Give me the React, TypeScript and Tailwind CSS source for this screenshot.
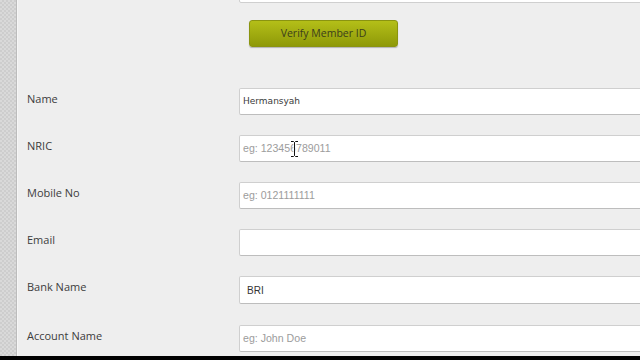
import React from 'react'

const rows = [
  { label: 'Name', value: 'Hermansyah', placeholder: '' },
  { label: 'NRIC', value: '', placeholder: 'eg: 123456789011' },
  { label: 'Mobile No', value: '', placeholder: 'eg: 0121111111' },
  { label: 'Email', value: '', placeholder: '' },
  { label: 'Bank Name', value: 'BRI', placeholder: '' },
  { label: 'Account Name', value: '', placeholder: 'eg: John Doe' }
]

function Field({ label, value, placeholder, idx }: { label: string; value: string; placeholder: string; idx: number }) {
  const bank = label === 'Bank Name'
  return (
    <div className={`flex items-center ${idx === 5 ? 'mt-[21px]' : 'mt-[20px]'} first:mt-0`}>
      <label className="w-[221px] shrink-0 pl-[9px] -mt-[5px] text-[11px] text-[#3c3c3c] font-['Open_Sans',sans-serif]">{label}</label>
      <div className={`relative flex-1 ${bank ? 'h-[28px]' : 'h-[27px]'} bg-white border border-[#cfcfcf] border-b-[#bdbdbd] rounded-l-[2px] -mr-[4px] flex items-center`}>
        {value ? (
          <span className={`${bank ? "pl-[7px] font-['Liberation_Sans',Arial,sans-serif] text-[10px] text-[#333]" : "pl-[3px] font-['DejaVu_Sans',Verdana,sans-serif] text-[9px] text-[#3a3a3a]"}`}>{value}</span>
        ) : (
          <span className="pl-[3px] font-['Liberation_Sans',Arial,sans-serif] text-[10.6px] text-[#9c9c9c]">{placeholder}</span>
        )}
        {label === 'NRIC' && (
          <svg className="absolute left-[50px] top-[4px]" width="9" height="18" viewBox="0 0 9 18">
            <path d="M1 1.5h2.5l1 1 1-1H8M4.5 2.5v13M1 16.5h2.5l1-1 1 1H8" fill="none" stroke="#fff" strokeWidth="2.4" />
            <path d="M1 1.5h2.5l1 1 1-1H8M4.5 2.5v13M1 16.5h2.5l1-1 1 1H8" fill="none" stroke="#111" strokeWidth="1" />
          </svg>
        )}
      </div>
    </div>
  )
}

export default function App() {
  return (
    <div className="w-[640px] h-[360px] overflow-hidden flex flex-col bg-black">
      <div className="flex flex-1 min-h-0">
        <div className="w-[16px] shrink-0 bg-[#d3d3d3] bg-[repeating-conic-gradient(#cdcdcd_0_25%,#d9d9d9_0_50%)] bg-[length:4px_4px]" />
        <div className="w-[1px] shrink-0 bg-[#bcbcbc]" />
        <div className="flex-1 bg-[#eeeeee] border-l border-[#f6f6f6] overflow-hidden">
          <div className="ml-[221px] -mt-[24px] h-[27px] bg-white border border-[#cfcfcf] rounded-l-[2px] -mr-[4px]" />
          <button className="ml-[231px] mt-[17px] w-[149px] h-[27px] rounded-[3px] bg-gradient-to-b from-[#b4bf18] to-[#8e9908] border border-[#8a9410] shadow-[0_1px_1px_rgba(0,0,0,0.25)] text-[10.5px] text-[#3b3d1c] font-['Open_Sans',sans-serif]">
            Verify Member ID
          </button>
          <div className="mt-[41px]">
            {rows.map((r, i) => (
              <Field key={r.label} idx={i} {...r} />
            ))}
          </div>
        </div>
      </div>
      <div className="h-[4px] shrink-0 bg-black" />
    </div>
  )
}
